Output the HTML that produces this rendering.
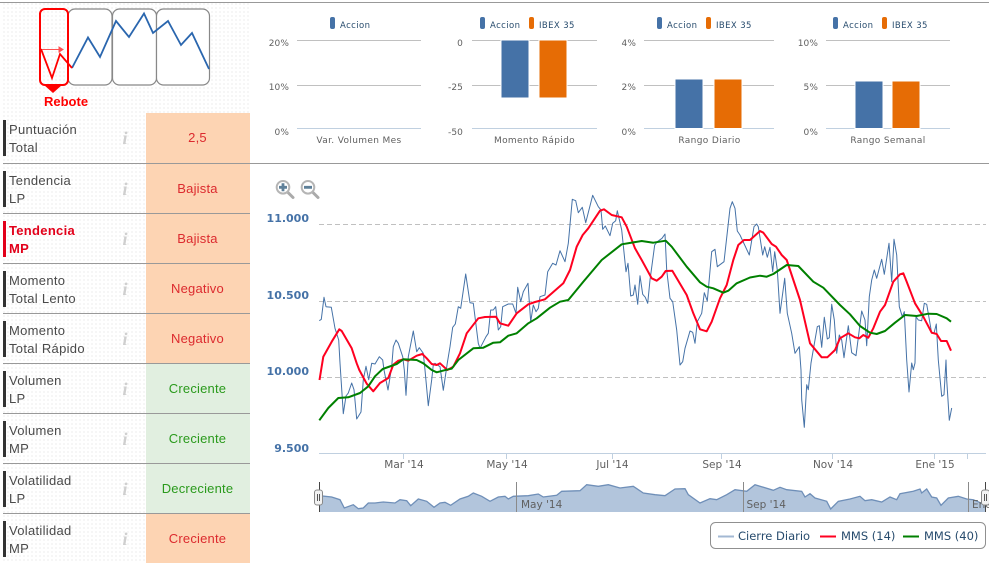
<!DOCTYPE html>
<html lang="es"><head><meta charset="utf-8"><title>Análisis</title>
<style>
html,body{margin:0;padding:0;background:#fff;width:989px;height:563px;overflow:hidden}
#dots{position:absolute;left:3px;top:3px;width:247px;height:560px;background-image:radial-gradient(circle at 1px 1px,#f5f5f5 1px,transparent 1.2px);background-size:4px 4px}
svg{position:absolute;left:0;top:0}
.l{font:13px "Liberation Sans",sans-serif;fill:#4a4a4a;letter-spacing:.3px}
.lr{font:bold 13px "Liberation Sans",sans-serif;fill:#e2001a;letter-spacing:.3px}
.v{font:13px "Liberation Sans",sans-serif;text-anchor:middle;letter-spacing:.2px}
.i{font:italic bold 18px "Liberation Serif",serif;fill:#cfcfcf;text-anchor:middle}
.s{font:9px "DejaVu Sans",sans-serif;fill:#606060;letter-spacing:.35px}
.ya{font:9px "DejaVu Sans",sans-serif;fill:#606060;text-anchor:end;letter-spacing:.1px}
.lg{font:8.5px "DejaVu Sans",sans-serif;fill:#274b6d;letter-spacing:.4px}
.y{font:bold 11px "DejaVu Sans",sans-serif;fill:#4572a7;text-anchor:end}
.x{font:10.5px "DejaVu Sans",sans-serif;fill:#606060;text-anchor:middle}
.lb{font:11.5px "DejaVu Sans",sans-serif;fill:#274b6d}
</style></head><body>
<div id="dots"></div>
<svg width="989" height="563" viewBox="0 0 989 563" xmlns="http://www.w3.org/2000/svg">
<!-- cells -->
<g>
<rect x="146" y="113" width="104" height="250" fill="#fdd4b3"/>
<rect x="146" y="363" width="104" height="150" fill="#e1efe0"/>
<rect x="146" y="513" width="104" height="50" fill="#fdd4b3"/>
</g>
<!-- separators -->
<g fill="#999">
<rect x="0" y="2" width="989" height="1"/>
<rect x="3" y="163" width="986" height="1"/>
<rect x="3" y="213" width="247" height="1"/>
<rect x="3" y="263" width="247" height="1"/>
<rect x="3" y="313" width="247" height="1"/>
<rect x="3" y="363" width="247" height="1"/>
<rect x="3" y="413" width="247" height="1"/>
<rect x="3" y="463" width="247" height="1"/>
<rect x="3" y="513" width="247" height="1"/>
</g>
<!-- row bars -->
<g fill="#333">
<rect x="3" y="120" width="3" height="36"/>
<rect x="3" y="171" width="3" height="36"/>
<rect x="3" y="221" width="3" height="36" fill="#e2001a"/>
<rect x="3" y="271" width="3" height="36"/>
<rect x="3" y="321" width="3" height="36"/>
<rect x="3" y="371" width="3" height="36"/>
<rect x="3" y="421" width="3" height="36"/>
<rect x="3" y="471" width="3" height="36"/>
<rect x="3" y="521" width="3" height="36"/>
</g>
<!-- row labels -->
<text class="l" x="9" y="134">Puntuación</text><text class="l" x="9" y="152">Total</text>
<text class="l" x="9" y="185">Tendencia</text><text class="l" x="9" y="203">LP</text>
<text class="lr" x="9" y="235">Tendencia</text><text class="lr" x="9" y="253">MP</text>
<text class="l" x="9" y="285">Momento</text><text class="l" x="9" y="303">Total Lento</text>
<text class="l" x="9" y="335">Momento</text><text class="l" x="9" y="353">Total Rápido</text>
<text class="l" x="9" y="385">Volumen</text><text class="l" x="9" y="403">LP</text>
<text class="l" x="9" y="435">Volumen</text><text class="l" x="9" y="453">MP</text>
<text class="l" x="9" y="485">Volatilidad</text><text class="l" x="9" y="503">LP</text>
<text class="l" x="9" y="535">Volatilidad</text><text class="l" x="9" y="553">MP</text>
<!-- info -->
<text class="i" x="125" y="144">i</text><text class="i" x="125" y="195">i</text><text class="i" x="125" y="245">i</text><text class="i" x="125" y="295">i</text><text class="i" x="125" y="345">i</text><text class="i" x="125" y="395">i</text><text class="i" x="125" y="445">i</text><text class="i" x="125" y="495">i</text><text class="i" x="125" y="545">i</text>
<!-- values -->
<g fill="#dc2a2e">
<text class="v" x="197.500" y="142">2,5</text>
<text class="v" x="197.500" y="193">Bajista</text>
<text class="v" x="197.500" y="243">Bajista</text>
<text class="v" x="197.500" y="293">Negativo</text>
<text class="v" x="197.500" y="343">Negativo</text>
<text class="v" x="197.500" y="543">Creciente</text>
</g>
<g fill="#2a9a1c">
<text class="v" x="197.500" y="393">Creciente</text>
<text class="v" x="197.500" y="443">Creciente</text>
<text class="v" x="197.500" y="493">Decreciente</text>
</g>
<!-- mini pattern -->
<g fill="#fff" stroke="#888" stroke-width="1.2">
<rect x="68" y="9" width="44" height="76" rx="7"/>
<rect x="112.500" y="9" width="44" height="76" rx="7"/>
<rect x="156.500" y="9" width="53" height="76" rx="7"/>
</g>
<polyline points="72,68 88,37.500 100,57 116,21 129,37 144,13.500 153,33 168,21 181,45 192,33 209,69" fill="none" stroke="#2a66ae" stroke-width="1.800"/>
<rect x="40" y="9" width="28" height="76" rx="5" fill="none" stroke="#ff0000" stroke-width="2"/>
<polyline points="41,49 52,78 60,54 72,68" fill="none" stroke="#ff0000" stroke-width="1.800"/>
<path d="M42 49.500H62M59 47l4 2.500-4 2.500z" fill="#ff5050" stroke="#ff5050" stroke-width="1"/>
<polygon points="44,85 62,85 53,93" fill="#ff0000"/>
<text x="44" y="106" style="font:bold 13px 'Liberation Sans',sans-serif;fill:#ff0000">Rebote</text>

<!-- small charts -->
<g stroke="#c0c0c0" stroke-width="1" shape-rendering="crispEdges">
<path d="M297 40.500H421M297 85.500H421"/>
<path d="M472 40.500H597M472 85.500H597"/>
<path d="M644 40.500H774M644 85.500H774"/>
<path d="M826 40.500H950M826 85.500H950"/>
</g>
<g stroke="#c0d0e0" stroke-width="1" shape-rendering="crispEdges">
<path d="M297 128.500H421M472 128.500H597M644 128.500H774M826 128.500H950"/>
</g>
<g stroke="#fff" stroke-width="1" shape-rendering="crispEdges">
<rect x="501" y="40" width="28" height="58" fill="#4572a7"/>
<rect x="539" y="40" width="28" height="58" fill="#e66c05"/>
<rect x="675" y="79" width="28" height="49.500" fill="#4572a7"/>
<rect x="714" y="79" width="28" height="49.500" fill="#e66c05"/>
<rect x="855" y="81" width="28" height="47.500" fill="#4572a7"/>
<rect x="892" y="81" width="28" height="47.500" fill="#e66c05"/>
</g>
<g>
<rect x="330" y="17" width="5" height="12" rx="2" fill="#4572a7"/><text class="lg" x="340" y="28">Accion</text>
<rect x="480" y="17" width="5" height="12" rx="2" fill="#4572a7"/><text class="lg" x="490" y="28">Accion</text>
<rect x="529" y="17" width="5" height="12" rx="2" fill="#e66c05"/><text class="lg" x="539" y="28">IBEX 35</text>
<rect x="657" y="17" width="5" height="12" rx="2" fill="#4572a7"/><text class="lg" x="667" y="28">Accion</text>
<rect x="706" y="17" width="5" height="12" rx="2" fill="#e66c05"/><text class="lg" x="716" y="28">IBEX 35</text>
<rect x="833" y="17" width="5" height="12" rx="2" fill="#4572a7"/><text class="lg" x="843" y="28">Accion</text>
<rect x="882" y="17" width="5" height="12" rx="2" fill="#e66c05"/><text class="lg" x="892" y="28">IBEX 35</text>
</g>
<text class="ya" x="289" y="46">20%</text><text class="ya" x="289" y="90">10%</text><text class="ya" x="289" y="135">0%</text>
<text class="ya" x="463" y="46">0</text><text class="ya" x="463" y="90">-25</text><text class="ya" x="463" y="135">-50</text>
<text class="ya" x="636" y="46">4%</text><text class="ya" x="636" y="90">2%</text><text class="ya" x="636" y="135">0%</text>
<text class="ya" x="818" y="46">10%</text><text class="ya" x="818" y="90">5%</text><text class="ya" x="818" y="135">0%</text>
<text class="s" x="359" y="143" text-anchor="middle">Var. Volumen Mes</text>
<text class="s" x="534.500" y="143" text-anchor="middle">Momento Rápido</text>
<text class="s" x="709.500" y="143" text-anchor="middle">Rango Diario</text>
<text class="s" x="888" y="143" text-anchor="middle">Rango Semanal</text>

<!-- zoom icons -->
<g>
<path d="M288 192.500l5 5M313 192.500l5 5" stroke="#aaa" stroke-width="3" stroke-linecap="round"/>
<circle cx="283" cy="187.300" r="6.300" fill="#fff" stroke="#b5b5b5" stroke-width="2"/>
<circle cx="308" cy="187.300" r="6.300" fill="#fff" stroke="#b5b5b5" stroke-width="2"/>
<path d="M279 187.300h8M283 183.300v8M304 187.300h8" stroke="#5f8099" stroke-width="2.800"/>
</g>

<!-- main chart grid -->
<g stroke="#c0c0c0" stroke-width="1" stroke-dasharray="5,3" shape-rendering="crispEdges">
<path d="M319 224.500H986M319 301.500H986M319 377.500H986"/>
</g>
<g stroke="#c0d0e0" stroke-width="1" shape-rendering="crispEdges">
<path d="M319 453.500H986M403.500 453V459M506.500 453V459M612.500 453V459M721.500 453V459M832.500 453V459M934.500 453V459M967.500 453V459"/>
</g>
<text class="y" x="309" y="222">11.000</text>
<text class="y" x="309" y="299">10.500</text>
<text class="y" x="309" y="375">10.000</text>
<text class="y" x="309" y="452">9.500</text>
<text class="x" x="404" y="468">Mar '14</text>
<text class="x" x="507" y="468">May '14</text>
<text class="x" x="612.500" y="468">Jul '14</text>
<text class="x" x="722" y="468">Sep '14</text>
<text class="x" x="833" y="468">Nov '14</text>
<text class="x" x="935" y="468">Ene '15</text>

<!-- blue -->
<polyline fill="none" stroke="#4572a7" stroke-width="1" stroke-linejoin="round" points="319.300,320.700 321.300,319.300 324,297.300 326,306.700 331.300,307.300 335,328.300 338.700,340 340,363 343.300,413.700 346,396 348.300,393 351.700,383 354,389.700 356.700,419 361,412 363.300,379.700 366,366.300 368.700,379.700 371.700,363.300 375,364 379.300,356.700 382.700,360 384,370 388,390 391.700,366.700 393.300,346.700 396,340 398.300,343.300 402.700,356.700 404.300,370 406,395.300 408.300,356.700 413.300,331 416.700,351.700 419.300,347.700 423.300,353.300 425,370 428.300,405.700 431.700,379.700 433.300,364.700 435,363.300 440,366.700 443.300,390.300 447.300,363 450,346.700 452.700,327.300 455.300,324 458.300,306.700 460.700,308.300 465.700,274 470,302.700 473.300,303.300 478.300,343.300 480,348.300 486,336.700 488.300,333.300 490.700,310 493.300,310 495.700,306.700 498.300,330 500.700,326.700 502.700,306.700 508.300,304 512.700,304 516,313.300 517.700,287.300 520.700,301.700 523.300,291.700 528,283.300 530.700,321.700 533.300,305 536,311.700 538.300,308.300 540,296.700 545,295 547.700,271.700 552.700,263.300 556,265 560,250.700 565,261.700 568.300,243.300 572.300,199.300 575.700,200.700 578.300,212.700 582.300,207.300 585.700,222.700 592.700,195.300 598.300,206.700 601,210 602.700,229.300 605.300,226 610,235.700 612.700,223.300 615.700,220.700 617.300,210.700 621.700,230 626,271.700 628,263.300 630.700,296 633.300,295 635,285 637.700,304.300 640,275.700 642.700,294.300 645.300,297.300 647.700,303.300 650,280 654.700,245 657.300,241.700 662,238.300 665,234 666.700,270 670,298.300 672.700,301.700 676.700,330 680,365 682.700,361.700 685,348.300 690,331 692.700,332.300 695,343.300 697.300,321.700 701.700,313.300 704.300,292.700 707.300,301 711.700,251.700 715,249.300 717.300,266.700 724,261.700 730,208.300 732.300,201.700 735,208.300 737.300,231 740,235 749.300,255 754,226.700 756.700,224 758.300,226.700 762.700,255 764.700,246.700 767.300,257.300 770,247.300 772.700,271.700 774.700,251.700 777.300,270 780,313.300 784.700,278.300 787.300,313.300 791.700,333.300 795,353.300 799.300,346.700 801,370 801.700,399.700 804.300,427.300 806.700,384.700 808.300,389.700 811,363 815,340 817.300,326.700 819.300,325.700 821.700,347.300 824.300,317.300 827.300,339 829.300,337.700 831.700,304.300 834.300,320 836.700,353.300 839.300,335 841.700,340 844,357.700 848.300,325.700 851.700,352.700 856,355.700 861.700,311 865,320 866.700,345.700 869.300,296.700 871.700,280 874.300,270 876.700,278.300 881.700,259.300 884.300,274.300 889,243.300 891.700,281.700 894,239.300 896.700,255 899.300,306.700 902.300,316.700 904.300,311.700 906.700,360 909,392 911.700,363 913.300,369.700 915,363 916,316.700 918.300,320 921.700,320.700 924.300,303.300 926.700,304.300 931.700,333.300 934,333.300 936.300,324 938.300,360 941.700,396.300 944,394.700 946,360 946.700,379.700 949.300,420.300 951.700,408"/>
<!-- red -->
<polyline fill="none" stroke="#ff0020" stroke-width="2" stroke-linejoin="round" points="319.500,380 323.300,356.700 331.700,341.700 339.300,329.300 341.700,331 351.700,348.300 356.700,363.300 359.300,370 366.700,383.700 373.300,391.300 380,383 388.300,378 393.300,364.700 398.300,360.700 403.300,359.300 408.300,360.700 416.700,355.700 422.300,354 426.700,358.300 431.700,364 436.700,365 440,363.300 447.300,370 453.300,366.700 460,353.300 466.700,333.300 478.300,318.300 485,317 496,316.700 500,323.300 508.300,325.700 516.700,313.300 528.300,304.300 535,302 545,299.300 563.300,283.300 570,270 576.700,246.700 582.700,235 588.300,228.300 600,210.700 604,209.300 611.700,215 621.700,217.300 626.700,226.700 635,248.300 641.700,260 651.700,278.300 656.700,280.700 661.700,276.700 665.700,271 672.300,270.700 686.700,295 693.300,313.300 700,329.300 706.700,331.300 711.700,321.700 720,298.300 726.700,285 733.300,260 738.300,245 744,240 750,240 760,231 763.300,232.700 771.700,244 776,246.700 781.700,255 786.700,260 800,300 810,343.300 821.700,357.300 827.300,357.300 835,350 840,338.300 848.300,333.300 855,337.300 859.300,338.300 863.300,335 868.300,337.700 873.300,328.300 880,311.700 885,305 893.300,281.700 900,274.300 903.300,273.300 906.700,281.700 915,303.300 923.300,316.700 931.700,332.700 936.700,334 941,341 946.700,341 951,350.700"/>
<!-- green -->
<polyline fill="none" stroke="#008000" stroke-width="2" stroke-linejoin="round" points="319.300,420.300 328.300,408 338.300,398 348.300,397.300 360,393 368.300,386.300 375,376.300 382.700,369 396.700,364 403.300,359.300 416.700,360 423.300,363.300 431.700,370 436.700,372.300 446.700,369.700 451.700,368.700 458.300,360 473.300,348.300 483.300,347.700 493.300,342.700 500,342.300 508.300,335.700 516.700,333.300 528.300,323.300 536.700,318.300 550,307.700 560,301.700 568.300,300 583.300,281.700 601.700,260 621.700,244.300 641.700,241 653.300,242.700 665.700,240.700 671.700,246.700 686.700,266.700 700,282.300 706.700,286.700 713.300,288.300 723.300,292.700 728.300,290.700 736.700,283.300 750,277.500 760,275.700 766.700,276.700 773.300,274 786.700,265 798.300,266 813.300,281.700 823.300,287.700 840,305 850,314.300 860,326 870,332.700 876.700,334 885,331 895,322.700 905,315 916.700,316 928.300,313.700 936.700,314 946.700,318.300 951,321.700"/>

<!-- navigator -->
<path fill="#b2c5dc" stroke="none" d="M319.300 512V495.700L331.700 497 340 499.700 344.300 508 353.300 504.700 358.300 508.700 363.300 508 368.300 503 375 503 383.300 502 395 503 400 499.700 406.700 500.700 410.700 505.700 418.300 499 426.700 501.300 434 507.300 440 503 445 502.300 450.700 505.300 460 499 468.300 496.300 473.300 493 481.700 496.300 490 501.300 498.300 497 505 496.300 508.300 499 513.300 496.300 528.300 495.700 538.300 494 543.300 497 556.700 495.300 561.700 491.300 580 490.700 586.700 484.700 598.300 486.300 608.300 484.700 620 488 633.300 486.300 643.300 493 655 494.700 665 495.700 675 489 685 488.700 688.300 494.700 700 503 710 498.700 716.700 499.700 726.700 494.700 735 489.700 746.700 491.300 755 484.700 773.300 490.300 780 487.300 786.700 489.700 801.700 491.300 805 497 810 493.700 815 498 826.700 501.300 830.700 509 838.300 501.300 850 499 860 496.300 865 500.700 871.700 499.700 881.700 502 890 497 896.700 499.700 900 493.700 913.300 491.300 920 489 921.700 493 926.700 489 931.700 497 936.700 498 941 505.300 948.300 498 958.300 496.300 966.700 499 973.300 499.700 985 504.700V512Z"/>
<polyline fill="none" stroke="#6f8fb8" stroke-width="1.300" points="319.300,495.700 331.700,497 340,499.700 344.300,508 353.300,504.700 358.300,508.700 363.300,508 368.300,503 375,503 383.300,502 395,503 400,499.700 406.700,500.700 410.700,505.700 418.300,499 426.700,501.300 434,507.300 440,503 445,502.300 450.700,505.300 460,499 468.300,496.300 473.300,493 481.700,496.300 490,501.300 498.300,497 505,496.300 508.300,499 513.300,496.300 528.300,495.700 538.300,494 543.300,497 556.700,495.300 561.700,491.300 580,490.700 586.700,484.700 598.300,486.300 608.300,484.700 620,488 633.300,486.300 643.300,493 655,494.700 665,495.700 675,489 685,488.700 688.300,494.700 700,503 710,498.700 716.700,499.700 726.700,494.700 735,489.700 746.700,491.300 755,484.700 773.300,490.300 780,487.300 786.700,489.700 801.700,491.300 805,497 810,493.700 815,498 826.700,501.300 830.700,509 838.300,501.300 850,499 860,496.300 865,500.700 871.700,499.700 881.700,502 890,497 896.700,499.700 900,493.700 913.300,491.300 920,489 921.700,493 926.700,489 931.700,497 936.700,498 941,505.300 948.300,498 958.300,496.300 966.700,499 973.300,499.700 985,504.700"/>
<g stroke="#8a8a8a" stroke-width="1" shape-rendering="crispEdges">
<path d="M516.500 482V512M743.500 482V512M968.500 482V512"/>
</g>
<text x="521" y="508" class="x" style="text-anchor:start">May '14</text>
<text x="746.500" y="508" class="x" style="text-anchor:start">Sep '14</text>
<text x="972" y="508" class="x" style="text-anchor:start">Ene</text>
<g stroke="#444" stroke-width="1" shape-rendering="crispEdges">
<path d="M319.500 482V512M985.500 482V512"/>
</g>
<g fill="#f2f2f2" stroke="#888">
<rect x="314.500" y="490" width="8" height="15" rx="2.500"/>
<rect x="981.500" y="490" width="8" height="15" rx="2.500"/>
</g>
<path d="M317.500 494V501M319.500 494V501M984.500 494V501M986.500 494V501" stroke="#555" stroke-width="1" shape-rendering="crispEdges"/>

<!-- legend -->
<rect x="710.500" y="522.500" width="275" height="26" rx="5" fill="#fff" stroke="#909090"/>
<path d="M718 536.500H734" stroke="#a3b8d3" stroke-width="2"/>
<path d="M820 536.500H836" stroke="#ff0020" stroke-width="2"/>
<path d="M903 536.500H919" stroke="#008000" stroke-width="2"/>
<text class="lb" x="738" y="540">Cierre Diario</text>
<text class="lb" x="841" y="540">MMS (14)</text>
<text class="lb" x="924" y="540">MMS (40)</text>
</svg>
</body></html>
